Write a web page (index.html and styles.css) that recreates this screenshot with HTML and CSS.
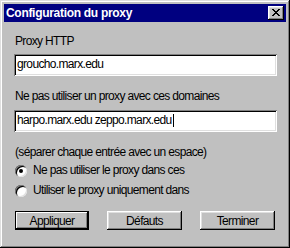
FILE: index.html
```html
<!DOCTYPE html>
<html lang="fr">
<head>
<meta charset="utf-8">
<title>Configuration du proxy</title>
<link rel="stylesheet" href="styles.css">
</head>
<body>
<div class="window">
  <div class="titlebar">
    <span class="title">Configuration du proxy</span>
    <button class="close" aria-label="Fermer">
      <svg width="8" height="7" viewBox="0 0 8 7"><path d="M0 0h2v1h1v1h2V1h1V0h2v1H7v1H6v1H5v1h1v1h1v1h1v1H6V6H5V5H3v1H2v1H0V6h1V5h1V4h1V3H2V2H1V1H0z" fill="#000"/></svg>
    </button>
  </div>
  <div class="content">
    <div class="label first">Proxy HTTP</div>
    <div class="field">groucho.marx.edu</div>
    <div class="label second">Ne pas utiliser un proxy avec ces domaines</div>
    <div class="field">harpo.marx.edu zeppo.marx.edu<span class="caret"></span></div>
    <div class="label hint">(séparer chaque entrée avec un espace)</div>
    <div class="radios">
      <div class="radio-row"><span class="radio checked"></span><span>Ne pas utiliser le proxy dans ces</span></div>
      <div class="radio-row"><span class="radio"></span><span>Utiliser le proxy uniquement dans</span></div>
    </div>
    <div class="buttons">
      <button class="btn default"><span>Appliquer</span></button>
      <button class="btn"><span>Défauts</span></button>
      <button class="btn"><span>Terminer</span></button>
    </div>
  </div>
</div>
</body>
</html>
```

FILE: styles.css
```css
* { box-sizing: border-box; }
html, body { margin: 0; padding: 0; }
body {
  width: 290px;
  height: 248px;
  overflow: hidden;
  font-family: "Liberation Sans", Arial, sans-serif;
  font-size: 12px;
  letter-spacing: -0.65px;
  color: #000;
  background: #c0c0c0;
}
.window {
  width: 290px;
  height: 248px;
  padding: 4px;
  background: #c0c0c0;
  box-shadow: inset -1px -1px #000, inset 1px 1px #dfdfdf, inset -2px -2px #808080, inset 2px 2px #fff;
  display: flex;
  flex-direction: column;
}
.titlebar {
  height: 18px;
  background: #000080;
  display: flex;
  align-items: center;
  justify-content: space-between;
  padding: 0 2px 0 2px;
}
.title {
  color: #fff;
  font-weight: bold;
  font-size: 12px;
  letter-spacing: -0.3px;
  line-height: 18px;
}
.close {
  width: 16px;
  height: 14px;
  padding: 0;
  border: 0;
  background: #c0c0c0;
  box-shadow: inset -1px -1px #000, inset 1px 1px #fff, inset -2px -2px #808080, inset 2px 2px #dfdfdf;
  display: flex;
  align-items: center;
  justify-content: center;
}
.close svg { display: block; margin-left: -1px; margin-top: -1px; }
.content {
  padding: 0 9px 0 10px;
  display: flex;
  flex-direction: column;
}
.label {
  line-height: 13px;
  padding-left: 1px;
}
.label.first { margin-top: 13px; margin-bottom: 6px; }
.label.second { margin-top: 14px; margin-bottom: 7px; }
.label.hint { margin-top: 14px; }
.field {
  height: 22px;
  background: #fff;
  padding: 4px 3px 0 3px;
  line-height: 13px;
  box-shadow: inset 1px 1px #808080, inset -1px -1px #fff, inset 2px 2px #000, inset -2px -2px #dfdfdf;
  white-space: nowrap;
}
.caret {
  display: inline-block;
  width: 1px;
  height: 13px;
  margin-left: 1px;
  background: #000;
  vertical-align: top;
}
.radios {
  margin-top: 5px;
  display: flex;
  flex-direction: column;
  gap: 7px;
}
.radio-row {
  display: flex;
  align-items: center;
  gap: 6px;
  height: 13px;
  line-height: 13px;
  padding-left: 1px;
}
.radio {
  width: 12px;
  height: 12px;
  border-radius: 50%;
  background: #fff;
  box-shadow: inset 1px 1px #808080, inset -1px -1px #dfdfdf, inset 2px 2px #000;
  position: relative;
  flex: none;
}
.radio.checked::after {
  content: "";
  position: absolute;
  left: 4px;
  top: 4px;
  width: 4px;
  height: 4px;
  border-radius: 50%;
  background: #000;
}
.buttons {
  margin-top: 14px;
  display: grid;
  grid-template-columns: 74px 75px 75px;
  justify-content: space-between;
  padding: 0 2px 0 1px;
}
.btn {
  height: 19px;
  padding: 0;
  border: 0;
  background: #c0c0c0;
  font-family: inherit;
  font-size: 12px;
  letter-spacing: -0.65px;
  color: #000;
  box-shadow: inset -1px -1px #000, inset 1px 1px #fff, inset -2px -2px #808080, inset 2px 2px #dfdfdf;
}
.btn.default {
  box-shadow: inset 0 0 0 1px #000, inset -2px -2px #000, inset 2px 2px #fff, inset -3px -3px #808080;
}
```
